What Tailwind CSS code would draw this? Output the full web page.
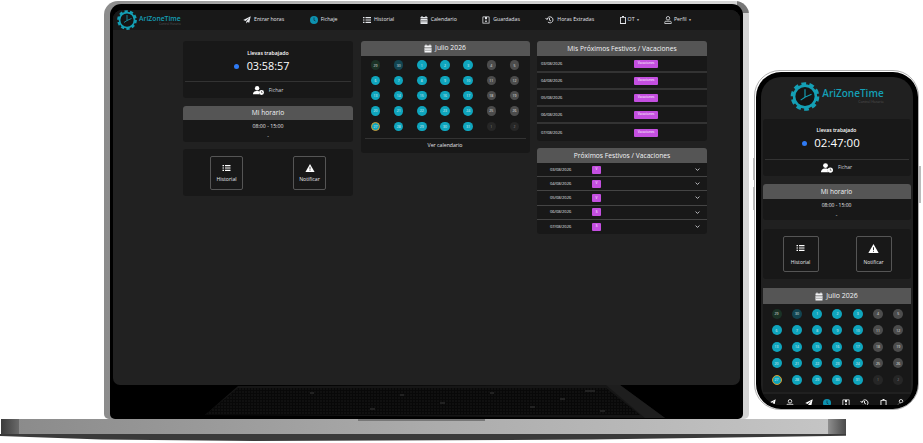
<!DOCTYPE html>
<html>
<head>
<meta charset="utf-8">
<script src="https://cdn.jsdelivr.net/npm/@tailwindcss/browser@4"></script>
</head>
<body class="bg-white overflow-hidden">
<svg class="hidden">
<symbol id="gear" viewBox="0 0 40 40"><circle cx="20" cy="20" r="15" fill="#141414" stroke="#149fb5" stroke-width="3.5"/><circle cx="20" cy="20" r="17.500" fill="none" stroke="#149fb5" stroke-width="4.500" stroke-dasharray="6.500 4.500"/><path d="M20 10v11l9-4M20 21l-6 4" fill="none" stroke="#149fb5" stroke-width="1.600"/></symbol>
<symbol id="plane" viewBox="0 0 16 16"><path d="M15.500.5 .5 8l4.500 2L13 3.500 6.500 11v4l2.500-3 3.500 1.500z" fill="currentColor"/></symbol>
<symbol id="clock" viewBox="0 0 16 16"><circle cx="8" cy="8" r="8" fill="#0d92b0"/><path d="M8 3v5.500l3 1.500" fill="none" stroke="#10384a" stroke-width="1.600"/></symbol>
<symbol id="list" viewBox="0 0 16 16"><path d="M0 2h3v2.400H0zM5 2h11v2.400H5zM0 6.800h3v2.400H0zM5 6.800h11v2.400H5zM0 11.600h3V14H0zM5 11.600h11V14H5z" fill="currentColor"/></symbol>
<symbol id="cal" viewBox="0 0 16 16"><path d="M3 0h2v2h6V0h2v2h2v3H1V2h2zM1 6h14v10H1zm2 2v1.500h2V8zm4 0v1.500h2V8zm4 0v1.500h2V8zm-8 3v1.500h2V11zm4 0v1.500h2V11zm4 0v1.500h2V11z" fill="currentColor" fill-rule="evenodd"/></symbol>
<symbol id="save" viewBox="0 0 16 16"><path d="M2 1h12a1 1 0 0 1 1 1v13H1V2a1 1 0 0 1 1-1zm.500 1.500v11h11v-11zM6 2.500h4v4H6zM6.500 9h3v3h-3z" fill="currentColor" fill-rule="evenodd"/></symbol>
<symbol id="hist" viewBox="0 0 16 16"><path d="M3 7a6 6 0 1 1 1.800 5M8 4v4.500l3 1.500M0 4l3 3 2.500-3" fill="none" stroke="currentColor" stroke-width="1.800"/></symbol>
<symbol id="clip" viewBox="0 0 12 16"><path d="M4 0h4v2h3a1 1 0 0 1 1 1v12a1 1 0 0 1-1 1H1a1 1 0 0 1-1-1V3a1 1 0 0 1 1-1h3zM1.800 3.500v10.700h8.400V3.500z" fill="currentColor" fill-rule="evenodd"/></symbol>
<symbol id="user" viewBox="0 0 16 16"><circle cx="8" cy="4.500" r="3.500" fill="none" stroke="currentColor" stroke-width="1.600"/><path d="M1.500 15v-2.500a2 2 0 0 1 2-2h9a2 2 0 0 1 2 2V15z" fill="none" stroke="currentColor" stroke-width="1.600"/></symbol>
<symbol id="uclock" viewBox="0 0 20 16"><circle cx="7.500" cy="4" r="4" fill="currentColor"/><path d="M0 15a6 5.500 0 0 1 6-6h3a6 6 0 0 1 3 1 5 5 0 0 0 0 5z" fill="currentColor"/><circle cx="15.500" cy="11.500" r="4.500" fill="currentColor"/><path d="M15.500 9v2.800h2" fill="none" stroke="#181818" stroke-width="1"/></symbol>
<symbol id="warn" viewBox="0 0 16 14"><path d="M8 0 16 14H0z" fill="currentColor"/><path d="M7.300 5h1.400v4.500H7.300zM7.300 10.500h1.400V12H7.300z" fill="#181818"/></symbol>
<symbol id="chev" viewBox="0 0 16 16"><path d="m2 5 6 6 6-6" fill="none" stroke="currentColor" stroke-width="2.500"/></symbol>
</svg>

<main class="relative w-[923px] h-[443px] overflow-hidden font-['Open_Sans','Noto_Sans',sans-serif]">

<!-- laptop base -->
<div class="absolute left-0 top-[434px] w-[846px] h-[7px] bg-[#3a3a3a] [clip-path:polygon(0_0,100%_0,100%_25%,70%_80%,30%_100%,12%_80%,0_30%)]"></div>
<div class="absolute left-[1px] top-[419px] w-[845px] h-[15px] bg-gradient-to-r from-[#8a8a8a] via-[#ababab] to-[#c6c6c6] rounded-tl-[2px]">
  <div class="flex justify-between h-full">
    <div class="w-[18px] h-full bg-gradient-to-r from-[#3c3c3c] to-[#6a6a6a]"></div>
    <div class="w-[18px] h-full bg-gradient-to-r from-[#8f8f8f] to-[#4a4a4a]"></div>
  </div>
</div>
<div class="absolute left-[358px] top-[419px] w-[127px] h-[1.500px] bg-[#777]"></div>

<!-- laptop lid -->
<div class="absolute left-[104px] top-[1px] w-[645px] h-[418px] rounded-t-[14px] rounded-b-[5px] bg-gradient-to-r from-[#8c8c8c] via-[#c8c8c8] to-[#d4d4d4] pt-[3px] px-[6px] overflow-hidden">
  <div class="absolute right-0 top-0 w-[12px] h-[12px] bg-[#777]"></div>
  <div class="w-full h-[415px] bg-black rounded-t-[11px] rounded-b-[5px] pt-[6px] pl-[3px] pr-[3px] relative overflow-hidden">
    <div class="w-[627px] h-[375px] bg-[#212121] rounded-t-[9px] rounded-b-[7px] overflow-hidden text-white">
      <!-- header -->
      <header class="h-[20px] bg-[#181818] flex items-center relative">
        <div class="flex items-center w-[130px] pl-[4px] gap-[2px] shrink-0">
          <svg class="w-[20px] h-[20px]"><use href="#gear"/></svg>
          <div>
            <div class="text-[6.800px] leading-[7px] font-semibold text-[#149fb5]">AriZoneTime</div>
            <div class="text-[3px] leading-[4px] text-[#555] text-right">Control Horario</div>
          </div>
        </div>
        <nav class="flex items-center gap-[25.500px] text-[5.200px] text-gray-200">
          <span class="flex items-center gap-[3px]"><svg class="w-[8px] h-[8px]"><use href="#plane"/></svg>Entrar horas</span>
          <span class="flex items-center gap-[3px]"><svg class="w-[8px] h-[8px]"><use href="#clock"/></svg>Fichaje</span>
          <span class="flex items-center gap-[3px]"><svg class="w-[8px] h-[8px]"><use href="#list"/></svg>Historial</span>
          <span class="flex items-center gap-[3px]"><svg class="w-[8px] h-[8px]"><use href="#cal"/></svg>Calendario</span>
          <span class="flex items-center gap-[3px]"><svg class="w-[8px] h-[8px]"><use href="#save"/></svg>Guardadas</span>
          <span class="flex items-center gap-[3px]"><svg class="w-[9px] h-[8px]"><use href="#hist"/></svg>Horas Extradas</span>
          <span class="flex items-center gap-[2px]"><svg class="w-[6px] h-[8px]"><use href="#clip"/></svg>OT<span class="text-[3px]">▼</span></span>
          <span class="flex items-center gap-[2px] -ml-[1px]"><svg class="w-[8px] h-[8px]"><use href="#user"/></svg>Perfil<span class="text-[3px]">▼</span></span>
        </nav>
      </header>
      <!-- content -->
      <div class="grid grid-cols-[170px_169px_170px] gap-x-[7.500px] pl-[70px] pt-[11px] items-start">
        <!-- column 1 -->
        <div class="flex flex-col gap-[7.500px]">
          <section class="bg-[#181818] rounded-[3px] h-[57px] flex flex-col items-center">
            <div class="text-[5.200px] font-semibold mt-[8px] leading-[8px] shrink-0">Llevas trabajado</div>
            <div class="flex items-center gap-[8px] mt-[2px] leading-[14px] pr-[13px] shrink-0"><span class="w-[5px] h-[5px] rounded-full bg-[#2f7bf5]"></span><span class="text-[10.800px]">03:58:57</span></div>
            <div class="self-stretch mx-[2px] border-t border-[#333] mt-[8px] flex items-center justify-center gap-[5px] h-[17px] pt-[1px] shrink-0 text-[5.200px] text-gray-300"><svg class="w-[11px] h-[9px] text-white"><use href="#uclock"/></svg>Fichar</div>
          </section>
          <section class="bg-[#181818] rounded-[3px] h-[36px] overflow-hidden text-center">
            <h2 class="bg-[#555] h-[14px] text-[6.700px] font-medium leading-[14px] text-gray-100">Mi horario</h2>
            <div class="text-[5.200px] leading-[10px] mt-[1px] text-gray-200">08:00 - 15:00</div>
            <div class="text-[5.200px] leading-[10px] text-gray-200">-</div>
          </section>
          <section class="bg-[#181818] rounded-[3px] h-[47px] flex items-center pl-[27px] gap-[50px]">
            <div class="w-[33px] h-[34px] border border-[#555] rounded-[2px] flex flex-col items-center justify-center gap-[4px] pt-[2px] text-[5.200px] text-gray-200"><svg class="w-[9px] h-[8px] text-white"><use href="#list"/></svg>Historial</div>
            <div class="w-[33px] h-[34px] border border-[#555] rounded-[2px] flex flex-col items-center justify-center gap-[4px] pt-[2px] text-[5.200px] text-gray-200"><svg class="w-[10px] h-[8px] text-white"><use href="#warn"/></svg>Notificar</div>
          </section>
        </div>
        <!-- column 2 -->
        <section class="bg-[#181818] rounded-[3px] h-[112px] overflow-hidden">
          <h2 class="bg-[#555] h-[15px] flex items-center justify-center gap-[3px] text-[6.800px] font-medium text-gray-100"><svg class="w-[8px] h-[9px]"><use href="#cal"/></svg>Julio 2026</h2>
          <div class="grid grid-cols-[repeat(7,23.170px)] justify-center auto-rows-[15.300px] pt-[1.500px] justify-items-center items-center text-[3.500px] text-white/80">
            <span class="size-[9.500px] rounded-full flex items-center justify-center bg-[#1b3226]">29</span><span class="size-[9.500px] rounded-full flex items-center justify-center bg-[#124552]">30</span><span class="size-[9.500px] rounded-full flex items-center justify-center bg-[#0fa5bd]">1</span><span class="size-[9.500px] rounded-full flex items-center justify-center bg-[#0fa5bd]">2</span><span class="size-[9.500px] rounded-full flex items-center justify-center bg-[#0fa5bd]">3</span><span class="size-[9.500px] rounded-full flex items-center justify-center bg-[#4c4c4c]">4</span><span class="size-[9.500px] rounded-full flex items-center justify-center bg-[#4c4c4c]">5</span>
            <span class="size-[9.500px] rounded-full flex items-center justify-center bg-[#0fa5bd]">6</span><span class="size-[9.500px] rounded-full flex items-center justify-center bg-[#0fa5bd]">7</span><span class="size-[9.500px] rounded-full flex items-center justify-center bg-[#0fa5bd]">8</span><span class="size-[9.500px] rounded-full flex items-center justify-center bg-[#0fa5bd]">9</span><span class="size-[9.500px] rounded-full flex items-center justify-center bg-[#0fa5bd]">10</span><span class="size-[9.500px] rounded-full flex items-center justify-center bg-[#4c4c4c]">11</span><span class="size-[9.500px] rounded-full flex items-center justify-center bg-[#4c4c4c]">12</span>
            <span class="size-[9.500px] rounded-full flex items-center justify-center bg-[#0fa5bd]">13</span><span class="size-[9.500px] rounded-full flex items-center justify-center bg-[#0fa5bd]">14</span><span class="size-[9.500px] rounded-full flex items-center justify-center bg-[#0fa5bd]">15</span><span class="size-[9.500px] rounded-full flex items-center justify-center bg-[#0fa5bd]">16</span><span class="size-[9.500px] rounded-full flex items-center justify-center bg-[#0fa5bd]">17</span><span class="size-[9.500px] rounded-full flex items-center justify-center bg-[#4c4c4c]">18</span><span class="size-[9.500px] rounded-full flex items-center justify-center bg-[#4c4c4c]">19</span>
            <span class="size-[9.500px] rounded-full flex items-center justify-center bg-[#0fa5bd]">20</span><span class="size-[9.500px] rounded-full flex items-center justify-center bg-[#0fa5bd]">21</span><span class="size-[9.500px] rounded-full flex items-center justify-center bg-[#0fa5bd]">22</span><span class="size-[9.500px] rounded-full flex items-center justify-center bg-[#0fa5bd]">23</span><span class="size-[9.500px] rounded-full flex items-center justify-center bg-[#0fa5bd]">24</span><span class="size-[9.500px] rounded-full flex items-center justify-center bg-[#4c4c4c]">25</span><span class="size-[9.500px] rounded-full flex items-center justify-center bg-[#4c4c4c]">26</span>
            <span class="size-[9.500px] rounded-full flex items-center justify-center bg-[#0fa5bd] border border-[#d99a2b]">27</span><span class="size-[9.500px] rounded-full flex items-center justify-center bg-[#0fa5bd]">28</span><span class="size-[9.500px] rounded-full flex items-center justify-center bg-[#0fa5bd]">29</span><span class="size-[9.500px] rounded-full flex items-center justify-center bg-[#0fa5bd]">30</span><span class="size-[9.500px] rounded-full flex items-center justify-center bg-[#0fa5bd]">31</span><span class="size-[9.500px] rounded-full flex items-center justify-center bg-[#262626] text-white/40">1</span><span class="size-[9.500px] rounded-full flex items-center justify-center bg-[#262626] text-white/40">2</span>
          </div>
          <div class="mx-[4px] mt-[4px] border-t border-[#333] text-center text-[5.200px] leading-[13px] text-gray-200">Ver calendario</div>
        </section>
        <!-- column 3 -->
        <div class="flex flex-col gap-[7px]">
          <section class="rounded-[3px] overflow-hidden">
            <h2 class="bg-[#555] h-[15px] text-[6.700px] font-medium leading-[15px] text-center text-gray-100">Mis Próximos Festivos / Vacaciones</h2>
            <ul class="text-[4px] text-gray-200 divide-y-2 divide-[#333]">
              <li class="h-[17px] bg-[#181818] flex items-center pl-[4px]"><span class="w-[93px]">03/08/2026</span><span class="w-[24px] h-[8px] rounded-[1px] bg-[#c44fe0] text-white text-[3.200px] flex items-center justify-center">Vacaciones</span></li>
              <li class="h-[17px] bg-[#181818] flex items-center pl-[4px]"><span class="w-[93px]">04/08/2026</span><span class="w-[24px] h-[8px] rounded-[1px] bg-[#c44fe0] text-white text-[3.200px] flex items-center justify-center">Vacaciones</span></li>
              <li class="h-[17px] bg-[#181818] flex items-center pl-[4px]"><span class="w-[93px]">05/08/2026</span><span class="w-[24px] h-[8px] rounded-[1px] bg-[#c44fe0] text-white text-[3.200px] flex items-center justify-center">Vacaciones</span></li>
              <li class="h-[17px] bg-[#181818] flex items-center pl-[4px]"><span class="w-[93px]">06/08/2026</span><span class="w-[24px] h-[8px] rounded-[1px] bg-[#c44fe0] text-white text-[3.200px] flex items-center justify-center">Vacaciones</span></li>
              <li class="h-[17px] bg-[#181818] flex items-center pl-[4px]"><span class="w-[93px]">07/08/2026</span><span class="w-[24px] h-[8px] rounded-[1px] bg-[#c44fe0] text-white text-[3.200px] flex items-center justify-center">Vacaciones</span></li>
            </ul>
          </section>
          <section class="rounded-[3px] overflow-hidden">
            <h2 class="bg-[#555] h-[15px] text-[6.700px] font-medium leading-[15px] text-center text-gray-100">Próximos Festivos / Vacaciones</h2>
            <ul class="text-[4px] text-gray-200 divide-y divide-[#444]">
              <li class="h-[14.200px] bg-[#181818] flex items-center pl-[13px]"><span class="w-[42px]">03/08/2026</span><span class="w-[9px] h-[8px] rounded-[1px] bg-[#c44fe0] text-white text-[3.200px] flex items-center justify-center">V</span><svg class="w-[5px] h-[5px] ml-auto mr-[7px] text-gray-200"><use href="#chev"/></svg></li>
              <li class="h-[14.200px] bg-[#181818] flex items-center pl-[13px]"><span class="w-[42px]">04/08/2026</span><span class="w-[9px] h-[8px] rounded-[1px] bg-[#c44fe0] text-white text-[3.200px] flex items-center justify-center">V</span><svg class="w-[5px] h-[5px] ml-auto mr-[7px] text-gray-200"><use href="#chev"/></svg></li>
              <li class="h-[14.200px] bg-[#181818] flex items-center pl-[13px]"><span class="w-[42px]">05/08/2026</span><span class="w-[9px] h-[8px] rounded-[1px] bg-[#c44fe0] text-white text-[3.200px] flex items-center justify-center">V</span><svg class="w-[5px] h-[5px] ml-auto mr-[7px] text-gray-200"><use href="#chev"/></svg></li>
              <li class="h-[14.200px] bg-[#181818] flex items-center pl-[13px]"><span class="w-[42px]">06/08/2026</span><span class="w-[9px] h-[8px] rounded-[1px] bg-[#c44fe0] text-white text-[3.200px] flex items-center justify-center">S</span><svg class="w-[5px] h-[5px] ml-auto mr-[7px] text-gray-200"><use href="#chev"/></svg></li>
              <li class="h-[14.200px] bg-[#181818] flex items-center pl-[13px]"><span class="w-[42px]">07/08/2026</span><span class="w-[9px] h-[8px] rounded-[1px] bg-[#c44fe0] text-white text-[3.200px] flex items-center justify-center">S</span><svg class="w-[5px] h-[5px] ml-auto mr-[7px] text-gray-200"><use href="#chev"/></svg></li>
            </ul>
          </section>
        </div>
      </div>
    </div>
    <!-- keyboard reflection on the glass -->
    <svg class="absolute left-[0px] top-[381px] w-[633px] h-[34px]" viewBox="0 0 633 34">
      <defs><pattern id="keys" width="3" height="3" patternUnits="userSpaceOnUse"><rect width="2" height="2" fill="#101010"/></pattern></defs>
      <polygon points="128,1 510,0 555,33 535,33 95,30" fill="#161616"/>
      <polygon points="496,0 510,0 555,33 535,33" fill="#1e1e1e"/>
      <polygon points="128,3 496,3 530,30 95,30" fill="#080808"/>
      <polygon points="128,3 496,3 530,30 95,30" fill="url(#keys)"/>
      <path d="M200 8h4M260 24h5M290 10h4M330 18h5M380 8h4M420 22h5M450 14h5M490 26h5M475 6h10" stroke="#2a2a2a" stroke-width="1.500"/>
    </svg>
  </div>
</div>

<!-- phone side buttons -->
<div class="absolute left-[753px] top-[158px] w-[2px] h-[22px] bg-[#bbb]"></div>
<div class="absolute left-[753px] top-[187px] w-[2px] h-[23px] bg-[#bbb]"></div>
<div class="absolute left-[919px] top-[166px] w-[2px] h-[37px] bg-[#bbb]"></div>

<!-- phone -->
<div class="absolute left-[754px] top-[70px] w-[165px] h-[340px] rounded-[26px] bg-white border border-[#b0b0b0] p-[0.500px]">
  <div class="w-full h-full bg-black rounded-[25px] pt-[5.500px] px-[5px] pb-[3.500px]">
    <div class="w-full h-full bg-[#202020] rounded-[20px] overflow-hidden text-white flex flex-col">
      <header class="flex items-center justify-center gap-[2px] h-[36px] shrink-0 pt-[2px] pl-[1px]">
        <svg class="w-[30px] h-[29px]"><use href="#gear"/></svg>
        <div>
          <div class="text-[10px] leading-[11px] font-semibold text-[#149fb5]">AriZoneTime</div>
          <div class="text-[3.500px] leading-[5px] text-[#555] text-right">Control Horario</div>
        </div>
      </header>
      <div class="px-[2px] flex flex-col">
        <section class="bg-[#181818] rounded-[3px] h-[57px] flex flex-col items-center mt-[6px]">
          <div class="text-[5px] font-semibold mt-[7px] leading-[8px] shrink-0">Llevas trabajado</div>
          <div class="flex items-center gap-[7px] mt-[1px] leading-[16px] pr-[11px] shrink-0"><span class="w-[5px] h-[5px] rounded-full bg-[#2f7bf5]"></span><span class="text-[11.500px]">02:47:00</span></div>
          <div class="self-stretch mx-[2px] border-t border-[#333] mt-[8px] flex items-center justify-center gap-[5px] h-[16px] shrink-0 text-[5px] text-gray-300"><svg class="w-[12px] h-[10px] text-white"><use href="#uclock"/></svg>Fichar</div>
        </section>
        <section class="bg-[#181818] rounded-[3px] h-[36px] overflow-hidden text-center mt-[8px]">
          <h2 class="bg-[#555] h-[15px] text-[6.500px] leading-[15px] text-gray-100">Mi horario</h2>
          <div class="text-[5px] leading-[10px] mt-[1px] text-gray-200">08:00 - 15:00</div>
          <div class="text-[5px] leading-[10px] text-gray-200">-</div>
        </section>
        <section class="bg-[#181818] rounded-[3px] h-[50px] flex items-center pl-[20px] gap-[37px] mt-[9px]">
          <div class="w-[36px] h-[36px] border border-[#555] rounded-[2px] flex flex-col items-center justify-center gap-[7px] pt-[3px] text-[5px] text-gray-200"><svg class="w-[9px] h-[8px] text-white"><use href="#list"/></svg>Historial</div>
          <div class="w-[36px] h-[36px] border border-[#555] rounded-[2px] flex flex-col items-center justify-center gap-[6px] pt-[3px] text-[5px] text-gray-200"><svg class="w-[11px] h-[9px] text-white"><use href="#warn"/></svg>Notificar</div>
        </section>
        <section class="bg-[#181818] mt-[9px] h-[104px] overflow-hidden">
          <h2 class="bg-[#555] h-[16px] flex items-center justify-center gap-[3px] text-[7px] text-gray-100"><svg class="w-[8px] h-[9px]"><use href="#cal"/></svg>Julio 2026</h2>
          <div class="grid grid-cols-[repeat(7,20.300px)] justify-center auto-rows-[16.500px] pt-[1.500px] pl-[2px] justify-items-center items-center text-[3.500px] text-white/80">
            <span class="size-[10px] rounded-full flex items-center justify-center bg-[#1b3226]">29</span><span class="size-[10px] rounded-full flex items-center justify-center bg-[#124552]">30</span><span class="size-[10px] rounded-full flex items-center justify-center bg-[#0fa5bd]">1</span><span class="size-[10px] rounded-full flex items-center justify-center bg-[#0fa5bd]">2</span><span class="size-[10px] rounded-full flex items-center justify-center bg-[#0fa5bd]">3</span><span class="size-[10px] rounded-full flex items-center justify-center bg-[#4c4c4c]">4</span><span class="size-[10px] rounded-full flex items-center justify-center bg-[#4c4c4c]">5</span>
            <span class="size-[10px] rounded-full flex items-center justify-center bg-[#0fa5bd]">6</span><span class="size-[10px] rounded-full flex items-center justify-center bg-[#0fa5bd]">7</span><span class="size-[10px] rounded-full flex items-center justify-center bg-[#0fa5bd]">8</span><span class="size-[10px] rounded-full flex items-center justify-center bg-[#0fa5bd]">9</span><span class="size-[10px] rounded-full flex items-center justify-center bg-[#0fa5bd]">10</span><span class="size-[10px] rounded-full flex items-center justify-center bg-[#4c4c4c]">11</span><span class="size-[10px] rounded-full flex items-center justify-center bg-[#4c4c4c]">12</span>
            <span class="size-[10px] rounded-full flex items-center justify-center bg-[#0fa5bd]">13</span><span class="size-[10px] rounded-full flex items-center justify-center bg-[#0fa5bd]">14</span><span class="size-[10px] rounded-full flex items-center justify-center bg-[#0fa5bd]">15</span><span class="size-[10px] rounded-full flex items-center justify-center bg-[#0fa5bd]">16</span><span class="size-[10px] rounded-full flex items-center justify-center bg-[#0fa5bd]">17</span><span class="size-[10px] rounded-full flex items-center justify-center bg-[#4c4c4c]">18</span><span class="size-[10px] rounded-full flex items-center justify-center bg-[#4c4c4c]">19</span>
            <span class="size-[10px] rounded-full flex items-center justify-center bg-[#0fa5bd]">20</span><span class="size-[10px] rounded-full flex items-center justify-center bg-[#0fa5bd]">21</span><span class="size-[10px] rounded-full flex items-center justify-center bg-[#0fa5bd]">22</span><span class="size-[10px] rounded-full flex items-center justify-center bg-[#0fa5bd]">23</span><span class="size-[10px] rounded-full flex items-center justify-center bg-[#0fa5bd]">24</span><span class="size-[10px] rounded-full flex items-center justify-center bg-[#4c4c4c]">25</span><span class="size-[10px] rounded-full flex items-center justify-center bg-[#4c4c4c]">26</span>
            <span class="size-[10px] rounded-full flex items-center justify-center bg-[#0fa5bd] border border-[#d99a2b]">27</span><span class="size-[10px] rounded-full flex items-center justify-center bg-[#0fa5bd]">28</span><span class="size-[10px] rounded-full flex items-center justify-center bg-[#0fa5bd]">29</span><span class="size-[10px] rounded-full flex items-center justify-center bg-[#0fa5bd]">30</span><span class="size-[10px] rounded-full flex items-center justify-center bg-[#0fa5bd]">31</span><span class="size-[10px] rounded-full flex items-center justify-center bg-[#262626] text-white/40">1</span><span class="size-[10px] rounded-full flex items-center justify-center bg-[#262626] text-white/40">2</span>
          </div>
        </section>
      </div>
      <nav class="mt-auto h-[11px] bg-[#141414] flex items-start justify-between px-[7px] pt-[4.500px] text-white shrink-0">
        <svg class="w-[8px] h-[8px] shrink-0"><use href="#plane"/></svg>
        <svg class="w-[8px] h-[8px] shrink-0"><use href="#user"/></svg>
        <svg class="w-[8px] h-[8px] shrink-0"><use href="#plane"/></svg>
        <svg class="w-[8px] h-[8px] shrink-0"><use href="#clock"/></svg>
        <svg class="w-[8px] h-[8px] shrink-0"><use href="#save"/></svg>
        <svg class="w-[9px] h-[8px] shrink-0"><use href="#hist"/></svg>
        <svg class="w-[7px] h-[8px] shrink-0"><use href="#clip"/></svg>
        <svg class="w-[8px] h-[8px] shrink-0"><use href="#user"/></svg>
      </nav>
    </div>
  </div>
</div>
</main>
</body>
</html>
